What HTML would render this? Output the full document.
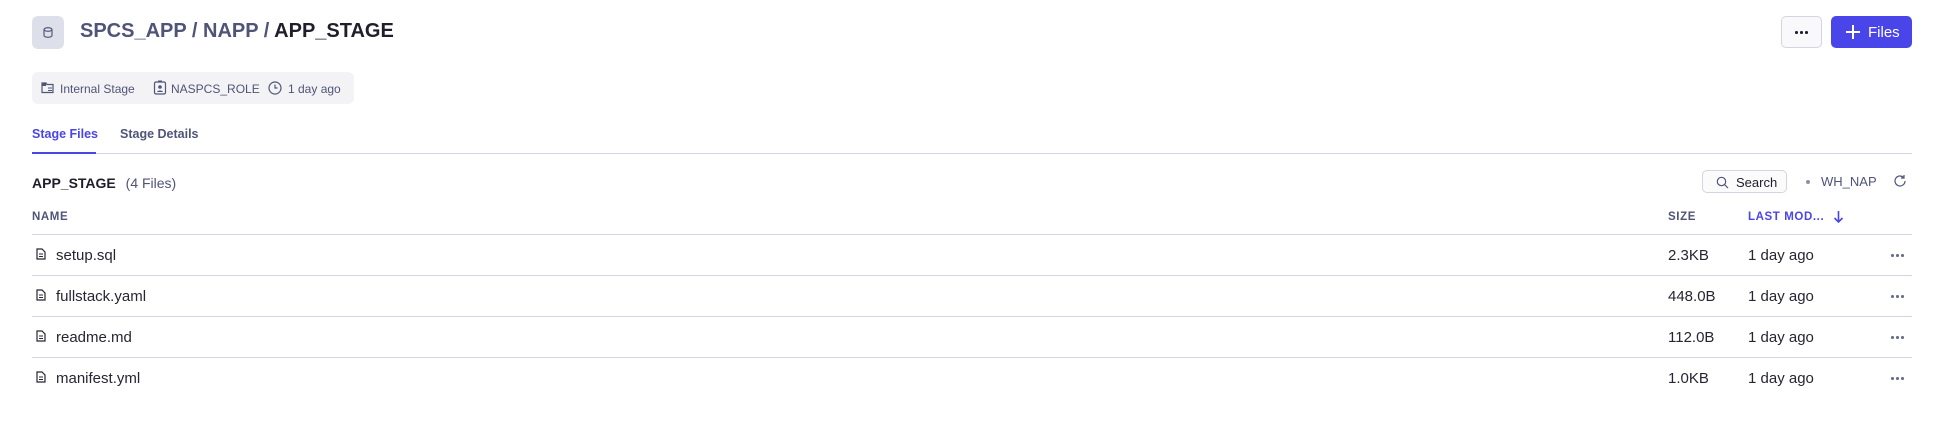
<!DOCTYPE html>
<html><head><meta charset="utf-8"><style>
*{margin:0;padding:0;box-sizing:border-box}
body{width:1936px;height:429px;background:#fff;font-family:"Liberation Sans",sans-serif;position:relative;overflow:hidden;color:#1e1f2b}
.a{position:absolute;white-space:nowrap}
.line{position:absolute;left:32px;width:1880px;height:1px;background:#d4d4e2}
.row{position:absolute;left:32px;width:1880px;height:40px;font-size:15px;color:#262633}
.row span{position:absolute;top:12px}
.dots{position:absolute;left:1859px;top:19px;width:14px;height:3px}
.dots i{position:absolute;top:0;width:2.5px;height:2.5px;border-radius:50%;background:#6a6e8e}
</style></head><body>
<div class="a" style="left:32px;top:16px;width:32px;height:33px;background:#dde0ea;border-radius:6px">
<svg width="32" height="33" viewBox="0 0 32 33"><ellipse cx="16" cy="13.5" rx="4" ry="1.8" fill="none" stroke="#4a4e6e" stroke-width="1.1"/><path d="M12 13.5v6c0 1 1.8 1.8 4 1.8s4-.8 4-1.8v-6" fill="none" stroke="#4a4e6e" stroke-width="1.1"/></svg></div>
<div class="a" style="left:80px;top:20px;font-size:20px;font-weight:bold;color:#4f5478">SPCS_APP / NAPP / <span style="color:#1e1f2b">APP_STAGE</span></div>
<div class="a" style="left:1781px;top:16px;width:41px;height:32px;border:1px solid #d4d4e2;border-radius:5px;background:#f9f9fb"><div class="dots" style="left:13px;top:14px"><i style="left:0;background:#1e1f2b"></i><i style="left:5px;background:#1e1f2b"></i><i style="left:10px;background:#1e1f2b"></i></div></div>
<div class="a" style="left:1831px;top:16px;width:81px;height:32px;background:#4a45e8;border-radius:5px;color:#fff;font-size:15px">
<svg class="a" style="left:15px;top:9px" width="14" height="14"><path d="M7 0v14M0 7h14" stroke="#fff" stroke-width="2"/></svg><span class="a" style="left:37px;top:8px">Files</span></div>
<div class="a" style="left:32px;top:72px;width:322px;height:32px;background:#f3f3f5;border-radius:6px;font-size:12px;color:#4f5478">
<svg class="a" style="left:9px;top:9px" width="14" height="14" viewBox="0 0 14 14"><path d="M1 2h4l1 1.5h6v8H1z" fill="none" stroke="#4f5478" stroke-width="1.2"/><path d="M1 2h4v3H1z" fill="#4f5478"/><path d="M7 7h4M7 9.5h4" stroke="#4f5478"/></svg>
<span class="a" style="left:28px;top:10px">Internal Stage</span>
<svg class="a" style="left:121px;top:8px" width="14" height="15" viewBox="0 0 14 15"><rect x="1.5" y="2" width="11" height="12" rx="1.5" fill="none" stroke="#4f5478" stroke-width="1.2"/><circle cx="7" cy="7" r="1.8" fill="#4f5478"/><path d="M4 12c.5-2 5.5-2 6 0" fill="#4f5478"/><path d="M5 1h4" stroke="#4f5478"/></svg>
<span class="a" style="left:139px;top:10px">NASPCS_ROLE</span>
<svg class="a" style="left:236px;top:9px" width="14" height="14" viewBox="0 0 14 14"><circle cx="7" cy="7" r="6" fill="none" stroke="#4f5478" stroke-width="1.2"/><path d="M7 3.5V7h2.5" fill="none" stroke="#4f5478" stroke-width="1.2"/></svg>
<span class="a" style="left:256px;top:10px">1 day ago</span></div>
<div class="a" style="left:32px;top:127px;font-size:12.5px;font-weight:bold;color:#4a45e8">Stage Files</div>
<div class="a" style="left:120px;top:127px;font-size:12.5px;font-weight:bold;color:#4f5478">Stage Details</div>
<div class="a" style="left:32px;top:153px;width:1880px;height:1px;background:#d4d4e2"></div>
<div class="a" style="left:32px;top:152px;width:64px;height:2px;background:#4a45e8"></div>
<div class="a" style="left:32px;top:175px;font-size:14px;font-weight:bold">APP_STAGE <span style="font-weight:normal;color:#4f5478;margin-left:6px">(4 Files)</span></div>
<div class="a" style="left:1702px;top:170px;width:85px;height:23px;border:1px solid #d4d4e2;border-radius:5px;background:#fbfbfc;font-size:13px">
<svg class="a" style="left:13px;top:5px" width="13" height="13" viewBox="0 0 13 13"><circle cx="5.5" cy="5.5" r="4.2" fill="none" stroke="#4f5478" stroke-width="1.2"/><path d="M8.5 8.5l3.5 3.5" stroke="#4f5478" stroke-width="1.2"/></svg>
<span class="a" style="left:33px;top:4px">Search</span></div>
<div class="a" style="left:1806px;top:180px;width:4px;height:4px;border-radius:50%;background:#8e90a6"></div>
<div class="a" style="left:1821px;top:174px;font-size:13px;color:#4f5478">WH_NAP</div>
<svg class="a" style="left:1893px;top:174px" width="14" height="14" viewBox="0 0 14 14"><path d="M12 7a5 5 0 1 1-1.5-3.6" fill="none" stroke="#4f5478" stroke-width="1.2"/><path d="M11 1v3H8" fill="none" stroke="#4f5478" stroke-width="1.2"/></svg>
<div class="a" style="left:32px;top:211px;font-size:11.5px;font-weight:bold;color:#4f5478;letter-spacing:.6px">NAME</div>
<div class="a" style="left:1668px;top:211px;font-size:11.5px;font-weight:bold;color:#4f5478;letter-spacing:.6px">SIZE</div>
<div class="a" style="left:1748px;top:211px;font-size:11.5px;font-weight:bold;color:#4a45e8;letter-spacing:.6px">LAST MOD...</div>
<svg class="a" style="left:1833px;top:210px" width="11" height="13" viewBox="0 0 11 13"><path d="M5.5 1v11M1.5 8l4 4 4-4" fill="none" stroke="#4a45e8" stroke-width="1.6"/></svg>
<div class="line" style="top:234px"></div>
<div class="line" style="top:275px"></div>
<div class="line" style="top:316px"></div>
<div class="line" style="top:357px"></div>
<div class="row" style="top:235px"><svg class="a" style="left:4px;top:13px" width="10" height="12" viewBox="0 0 10 12"><path d="M1 1h5l3 3v7H1z" fill="none" stroke="#262633" stroke-width="1.2"/><path d="M3 6h4M3 8.5h4" stroke="#262633"/></svg><span style="left:24px">setup.sql</span><span style="left:1636px">2.3KB</span><span style="left:1716px">1 day ago</span><div class="dots"><i style="left:0"></i><i style="left:5px"></i><i style="left:10px"></i></div></div>
<div class="row" style="top:276px"><svg class="a" style="left:4px;top:13px" width="10" height="12" viewBox="0 0 10 12"><path d="M1 1h5l3 3v7H1z" fill="none" stroke="#262633" stroke-width="1.2"/><path d="M3 6h4M3 8.5h4" stroke="#262633"/></svg><span style="left:24px">fullstack.yaml</span><span style="left:1636px">448.0B</span><span style="left:1716px">1 day ago</span><div class="dots"><i style="left:0"></i><i style="left:5px"></i><i style="left:10px"></i></div></div>
<div class="row" style="top:317px"><svg class="a" style="left:4px;top:13px" width="10" height="12" viewBox="0 0 10 12"><path d="M1 1h5l3 3v7H1z" fill="none" stroke="#262633" stroke-width="1.2"/><path d="M3 6h4M3 8.5h4" stroke="#262633"/></svg><span style="left:24px">readme.md</span><span style="left:1636px">112.0B</span><span style="left:1716px">1 day ago</span><div class="dots"><i style="left:0"></i><i style="left:5px"></i><i style="left:10px"></i></div></div>
<div class="row" style="top:358px"><svg class="a" style="left:4px;top:13px" width="10" height="12" viewBox="0 0 10 12"><path d="M1 1h5l3 3v7H1z" fill="none" stroke="#262633" stroke-width="1.2"/><path d="M3 6h4M3 8.5h4" stroke="#262633"/></svg><span style="left:24px">manifest.yml</span><span style="left:1636px">1.0KB</span><span style="left:1716px">1 day ago</span><div class="dots"><i style="left:0"></i><i style="left:5px"></i><i style="left:10px"></i></div></div>
</body></html>
